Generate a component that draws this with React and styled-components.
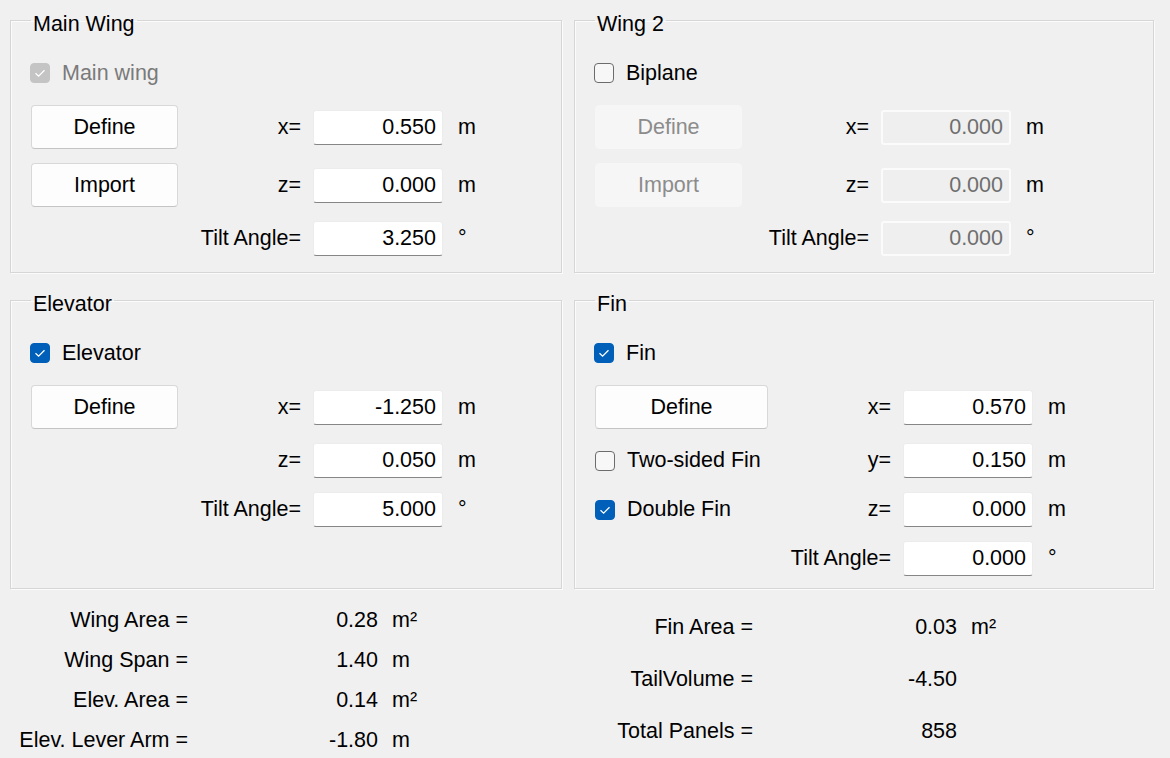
import React from "react";
import styled, { createGlobalStyle } from "styled-components";

function Check({ checked, disabled, children }) {
  return (
    <CheckLabel $disabled={disabled}>
      <Box $checked={checked} $disabled={disabled}>
        {checked && (
          <svg width="20" height="20" viewBox="0 0 20 20">
            <polyline
              points="5.5,10.2 8.6,13.2 14.5,7.2"
              fill="none"
              stroke="#fff"
              strokeWidth="1.3"
            />
          </svg>
        )}
      </Box>
      {children}
    </CheckLabel>
  );
}

function Input({ value, disabled }) {
  return <Field readOnly value={value} $disabled={disabled} disabled={disabled} />;
}

function Stat({ label, value, unit }) {
  return (
    <>
      <StatLabel>{label}</StatLabel>
      <StatValue>{value}</StatValue>
      <StatUnit>{unit}</StatUnit>
    </>
  );
}

function App() {
  return (
    <>
      <GlobalStyle />
      <Page>
        <Group $tail={118}>
          <Title>Main Wing</Title>
          <Rows>
            <CheckRow>
              <Check checked disabled>
                Main wing
              </Check>
            </CheckRow>
            <Row>
              <Lead $w={147}>
                <Button>Define</Button>
              </Lead>
              <Label>x=</Label>
              <Input value="0.550" />
              <Unit>m</Unit>
            </Row>
            <Row>
              <Lead $w={147}>
                <Button>Import</Button>
              </Lead>
              <Label>z=</Label>
              <Input value="0.000" />
              <Unit>m</Unit>
            </Row>
            <Row $h={35}>
              <Lead $w={147} />
              <Label>Tilt Angle=</Label>
              <Input value="3.250" />
              <Unit>°</Unit>
            </Row>
          </Rows>
        </Group>

        <Group $tail={142}>
          <Title>Wing 2</Title>
          <Rows>
            <CheckRow>
              <Check>Biplane</Check>
            </CheckRow>
            <Row>
              <Lead $w={147}>
                <Button disabled>Define</Button>
              </Lead>
              <Label>x=</Label>
              <Input value="0.000" disabled />
              <Unit>m</Unit>
            </Row>
            <Row>
              <Lead $w={147}>
                <Button disabled>Import</Button>
              </Lead>
              <Label>z=</Label>
              <Input value="0.000" disabled />
              <Unit>m</Unit>
            </Row>
            <Row $h={35}>
              <Lead $w={147} />
              <Label>Tilt Angle=</Label>
              <Input value="0.000" disabled />
              <Unit>°</Unit>
            </Row>
          </Rows>
        </Group>

        <Group $tail={118}>
          <Title>Elevator</Title>
          <Rows>
            <CheckRow>
              <Check checked>Elevator</Check>
            </CheckRow>
            <Row>
              <Lead $w={147}>
                <Button>Define</Button>
              </Lead>
              <Label>x=</Label>
              <Input value="-1.250" />
              <Unit>m</Unit>
            </Row>
            <Row $h={35}>
              <Lead $w={147} />
              <Label>z=</Label>
              <Input value="0.050" />
              <Unit>m</Unit>
            </Row>
            <Row $h={35}>
              <Lead $w={147} />
              <Label>Tilt Angle=</Label>
              <Input value="5.000" />
              <Unit>°</Unit>
            </Row>
          </Rows>
        </Group>

        <Group $tail={120}>
          <Title>Fin</Title>
          <Rows>
            <CheckRow>
              <Check checked>Fin</Check>
            </CheckRow>
            <Row>
              <Lead $w={173}>
                <Button>Define</Button>
              </Lead>
              <Label>x=</Label>
              <Input value="0.570" />
              <Unit>m</Unit>
            </Row>
            <Row $h={35}>
              <Lead $w={173}>
                <Check>Two-sided Fin</Check>
              </Lead>
              <Label>y=</Label>
              <Input value="0.150" />
              <Unit>m</Unit>
            </Row>
            <Row $h={35}>
              <Lead $w={173}>
                <Check checked>Double Fin</Check>
              </Lead>
              <Label>z=</Label>
              <Input value="0.000" />
              <Unit>m</Unit>
            </Row>
            <Row $h={35}>
              <Lead $w={173} />
              <Label>Tilt Angle=</Label>
              <Input value="0.000" />
              <Unit>°</Unit>
            </Row>
          </Rows>
        </Group>

        <Stats $label={178} $value={190} $row={40} $top={0}>
          <Stat label="Wing Area =" value="0.28" unit="m²" />
          <Stat label="Wing Span =" value="1.40" unit="m" />
          <Stat label="Elev. Area =" value="0.14" unit="m²" />
          <Stat label="Elev. Lever Arm =" value="-1.80" unit="m" />
        </Stats>

        <Stats $label={179} $value={204} $row={52} $top={1}>
          <Stat label="Fin Area =" value="0.03" unit="m²" />
          <Stat label="TailVolume =" value="-4.50" unit="" />
          <Stat label="Total Panels =" value="858" unit="" />
        </Stats>
      </Page>
    </>
  );
}

// Styled Components
const GlobalStyle = createGlobalStyle`
  html, body {
    margin: 0;
    background: #f0f0f0;
    font-family: "Liberation Sans", Arial, sans-serif;
    font-size: 21.5px;
    color: #000;
  }
`;

const Page = styled.div`
  display: grid;
  grid-template-columns: 552px 580px;
  grid-template-rows: 269px 305px auto;
  column-gap: 12px;
  row-gap: 11px;
  padding: 4px 0 0 10px;
  width: 1170px;
  height: 758px;
  box-sizing: border-box;
  overflow: hidden;
`;

const Group = styled.fieldset`
  --tail: ${(p) => p.$tail}px;
  margin: 0;
  min-width: 0;
  padding: 0 0 0 20px;
  border: 1px solid #d6d6d6;
  box-shadow: inset 1px 1px 0 #fbfbfb, 1px 1px 0 #fbfbfb;
  box-sizing: border-box;
`;

const Title = styled.legend`
  padding: 8px 2px 0;
  line-height: 24px;
  color: #000;
`;

const Rows = styled.div`
  display: flex;
  flex-direction: column;
  gap: 14px;
  padding-top: 19px;
`;

const Row = styled.div`
  display: flex;
  align-items: center;
  height: ${(p) => p.$h || 44}px;
`;

const CheckRow = styled(Row)`
  height: 36px;
  margin-left: -1px;
`;

const Lead = styled.div`
  width: ${(p) => p.$w}px;
  flex: none;
  display: flex;
  align-items: center;
`;

const Label = styled.span`
  flex: 1;
  text-align: right;
  padding-right: 12px;
  white-space: nowrap;
`;

const Field = styled.input`
  width: 130px;
  height: 35px;
  box-sizing: border-box;
  flex: none;
  margin: 0;
  padding: 0 6px 0 0;
  font: inherit;
  text-align: right;
  color: ${(p) => (p.$disabled ? "#6e6e6e" : "#000")};
  -webkit-text-fill-color: ${(p) => (p.$disabled ? "#6e6e6e" : "#000")};
  opacity: 1;
  background: ${(p) => (p.$disabled ? "#efefef" : "#fff")};
  border: ${(p) => (p.$disabled ? "2px solid #fbfbfb" : "1px solid #ececec")};
  border-bottom: ${(p) => (p.$disabled ? "2px solid #fbfbfb" : "1px solid #868686")};
  border-radius: 3px;
  outline: none;
`;

const Unit = styled.span`
  width: var(--tail);
  flex: none;
  box-sizing: border-box;
  padding-left: 15px;
`;

const Button = styled.button`
  width: 100%;
  height: 44px;
  margin: 0;
  padding: 0;
  font: inherit;
  color: ${(p) => (p.disabled ? "#8c8c8c" : "#000")};
  background: ${(p) => (p.disabled ? "#f6f6f6" : "#fdfdfd")};
  border: 1px solid ${(p) => (p.disabled ? "#f6f6f6" : "#d8d8d8")};
  border-bottom-color: ${(p) => (p.disabled ? "#f6f6f6" : "#c4c4c4")};
  border-radius: 4px;
`;

const CheckLabel = styled.label`
  display: flex;
  align-items: center;
  gap: 12px;
  white-space: nowrap;
  color: ${(p) => (p.$disabled ? "#7a7a7a" : "#000")};
`;

const Box = styled.span`
  width: 20px;
  height: 20px;
  box-sizing: border-box;
  flex: none;
  display: flex;
  border-radius: 4px;
  background: ${(p) =>
    p.$checked ? (p.$disabled ? "#c4c4c4" : "#005fb8") : "#f7f7f7"};
  border: 1px solid
    ${(p) => (p.$checked ? (p.$disabled ? "#c4c4c4" : "#005fb8") : "#6c6c6c")};
  svg {
    margin: -1px;
  }
`;

const Stats = styled.div`
  display: grid;
  grid-template-columns: ${(p) => p.$label}px ${(p) => p.$value}px auto;
  grid-auto-rows: ${(p) => p.$row}px;
  align-items: center;
  align-content: start;
  padding-top: ${(p) => p.$top}px;
  white-space: nowrap;
`;

const StatLabel = styled.span`
  text-align: right;
`;

const StatValue = styled.span`
  text-align: right;
`;

const StatUnit = styled.span`
  padding-left: 14px;
`;

export default App;
